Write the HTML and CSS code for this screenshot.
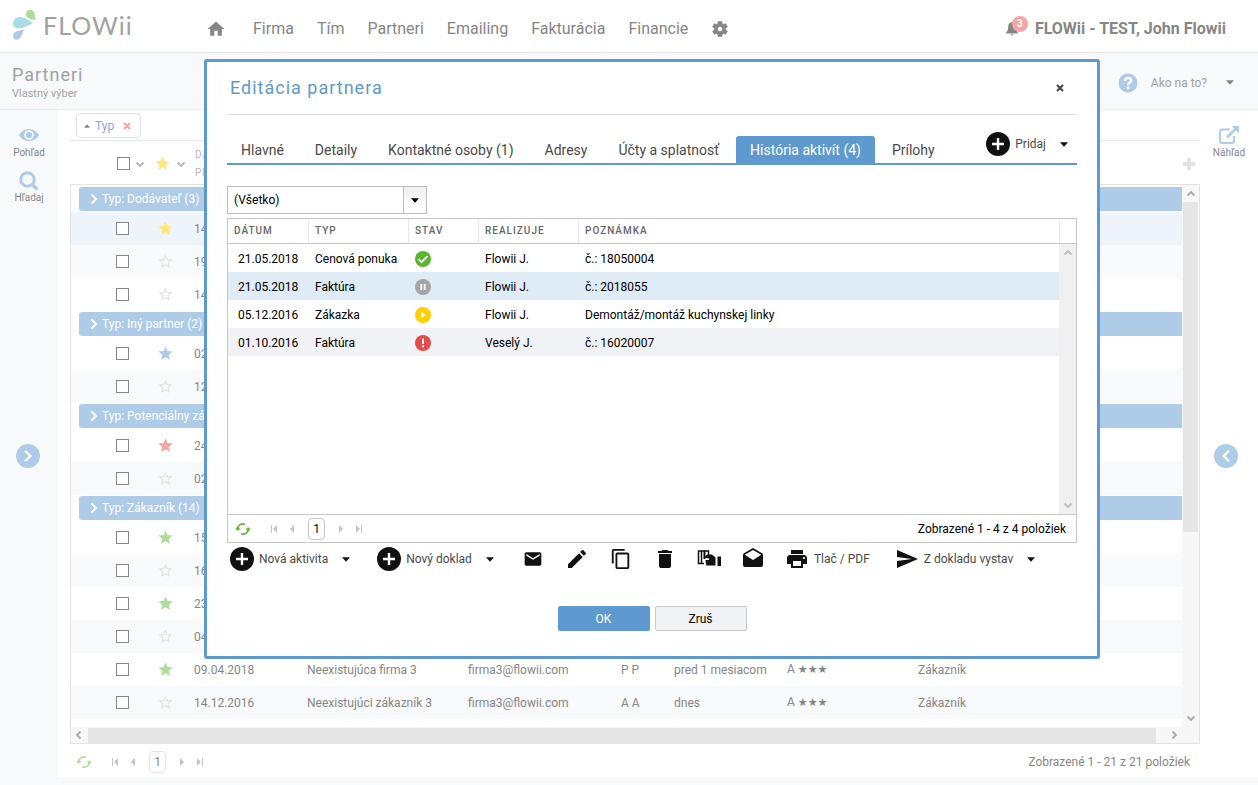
FILE: index.html
```html
<!DOCTYPE html>
<html lang="sk">
<head>
	<title>FLOWii - Partneri</title>
	<meta charset="utf-8">
	<link rel="stylesheet" href="styles.css">
</head>

<body>
<svg class="sprite" width="0" height="0">
	<symbol id="i-star" viewBox="0 0 24 24"><path d="M12 17.27L18.18 21l-1.64-7.03L22 9.24l-7.19-.61L12 2 9.19 8.63 2 9.24l5.46 4.73L5.82 21z"/></symbol>
	<symbol id="i-star-o" viewBox="0 0 24 24"><path d="M22 9.24l-7.19-.62L12 2 9.19 8.63 2 9.24l5.46 4.73L5.82 21 12 17.27 18.18 21l-1.63-7.03L22 9.24zM12 15.4l-3.76 2.27 1-4.28-3.32-2.88 4.38-.38L12 6.1l1.71 4.04 4.38.38-3.32 2.88 1 4.28L12 15.4z"/></symbol>
	<symbol id="i-right" viewBox="0 0 12 12"><path d="M3.500 1.500L8 6l-4.500 4.500" fill="none" stroke="currentColor" stroke-width="2"/></symbol>
	<symbol id="i-down" viewBox="0 0 10 10"><path d="M1.500 3.500L5 7l3.500-3.500" fill="none" stroke="currentColor" stroke-width="1.800"/></symbol>
	<symbol id="i-caret" viewBox="0 0 8 5"><path d="M0 .3h8L4 4.700z"/></symbol>
	<symbol id="i-x" viewBox="0 0 8 8"><path d="M1 1l6 6M7 1L1 7" fill="none" stroke="currentColor" stroke-width="2.200"/></symbol>
	<symbol id="i-add" viewBox="0 0 24 24"><circle cx="12" cy="12" r="12"/><path d="M12 6v12M6 12h12" stroke="#fff" stroke-width="2.400"/></symbol>
	<symbol id="i-refresh" viewBox="0 0 16 14"><path d="M2.800 8.500V7A5 5 0 0 1 10 2.400M13.200 5.500V7A5 5 0 0 1 6 11.600" fill="none" stroke="currentColor" stroke-width="1.600"/><path d="M0 7.500h5.600L2.800 4.600zM10.400 6.500H16l-2.800 2.900z"/></symbol>
	<symbol id="i-first" viewBox="0 0 8 8"><path d="M1 0h1v8H1zM7 0v8L3 4z"/></symbol>
	<symbol id="i-prev" viewBox="0 0 8 8"><path d="M6 0v8L2 4z"/></symbol>
	<symbol id="i-next" viewBox="0 0 8 8"><path d="M2 0v8l4-4z"/></symbol>
	<symbol id="i-last" viewBox="0 0 8 8"><path d="M6 0h1v8H6zM1 0v8l4-4z"/></symbol>
</svg>

<header class="topbar">
	<a class="logo" href="#">
		<svg width="24" height="32" viewBox="0 0 24 32">
			<path d="M14 5.500C14 1.500 17.500 0 20 1.200 23 2.600 23 7 23.500 11 19 10.500 14 9.500 14 5.500z" fill="#afdc99"/>
			<path d="M1 14.500C1 10 4.500 8 8 8c4.500 0 9 3.500 13 6-4 2.200-8 4.500-13 5.200-4 .5-7-1-7-4.700z" fill="#a9dde6"/>
			<path d="M12 20.500c-1.500 3.500-2.500 8-5.500 9.800C4 31.500.5 30 1 26.500c.5-4.500 6.500-4.800 11-6z" fill="#aecbe7"/>
		</svg>
		<span>FLOWii</span>
	</a>
	<nav class="mainnav">
		<a href="#" aria-label="Domov"><svg width="20" height="20" viewBox="0 0 24 24"><path d="M10 20v-6h4v6h5v-8h3L12 3 2 12h3v8z"/></svg></a>
		<a href="#">Firma</a>
		<a href="#">Tím</a>
		<a href="#">Partneri</a>
		<a href="#">Emailing</a>
		<a href="#">Fakturácia</a>
		<a href="#">Financie</a>
		<a href="#" aria-label="Nastavenia"><svg width="18" height="18" viewBox="0 0 24 24"><path fill-rule="evenodd" d="M19.430 12.980c.04-.32.07-.64.07-.98s-.03-.66-.07-.98l2.110-1.650c.19-.15.24-.42.12-.64l-2-3.460c-.12-.22-.39-.3-.61-.22l-2.490 1c-.52-.4-1.080-.73-1.690-.98l-.38-2.650C14.460 2.180 14.250 2 14 2h-4c-.25 0-.46.18-.49.42l-.38 2.650c-.61.25-1.170.59-1.690.98l-2.490-1c-.23-.09-.49 0-.61.22l-2 3.460c-.13.22-.07.49.12.64l2.110 1.650c-.04.32-.07.65-.07.98s.03.66.07.98l-2.110 1.650c-.19.15-.24.42-.12.64l2 3.460c.12.22.39.3.61.22l2.490-1c.52.4 1.080.73 1.690.98l.38 2.650c.03.24.24.42.49.42h4c.25 0 .46-.18.49-.42l.38-2.650c.61-.25 1.170-.59 1.690-.98l2.490 1c.23.09.49 0 .61-.22l2-3.460c.12-.22.07-.49-.12-.64l-2.110-1.650zM12 15.500c-1.930 0-3.500-1.570-3.500-3.500s1.570-3.500 3.500-3.500 3.500 1.570 3.500 3.500-1.570 3.500-3.500 3.500z" stroke="#868686" stroke-width="1"/></svg></a>
	</nav>
	<div class="account">
		<a class="bell" href="#" aria-label="Upozornenia">
			<svg width="14" height="14" viewBox="0 0 14 14"><path d="M7 0c2.500.4 3.800 2.200 3.800 4.700C10.800 8.500 12 9.500 13.500 11.500H.5C2 9.500 3.200 8.500 3.200 4.700 3.200 2.200 4.500.4 7 0zM5.500 12.300h3L7 13.900z"/></svg>
			<span class="badge">3</span>
		</a>
		<a href="#">FLOWii - TEST, John Flowii</a>
	</div>
</header>

<div class="subbar">
	<div>
		<h1>Partneri</h1>
		<p>Vlastný výber</p>
	</div>
	<button class="help" type="button">
		<svg width="20" height="20" viewBox="0 0 20 20"><circle cx="10" cy="10" r="9.500"/><path d="M7 8c0-4 6.200-4 6.200-.6 0 2.200-3.100 2.200-3.100 4.500" fill="none" stroke="#fff" stroke-width="2.400"/><circle cx="10.100" cy="14.800" r="1.500" fill="#fff"/></svg>
		<span>Ako na to?</span>
		<svg class="caret" width="8" height="5"><use href="#i-caret"/></svg>
	</button>
</div>

<div class="page">
	<aside class="side left">
		<a class="tool" href="#">
			<svg width="20" height="20" viewBox="0 0 20 20"><path fill-rule="evenodd" d="M0 9c4.500-8 15.500-8 20 0-4.500 8-15.500 8-20 0zM10 4.200a4.800 4.800 0 1 0 0 9.600 4.800 4.800 0 0 0 0-9.600z"/><circle cx="10" cy="9" r="3.100"/></svg>
			Pohľad
		</a>
		<a class="tool" href="#">
			<svg width="20" height="20" viewBox="0 0 20 20"><circle cx="8.500" cy="8.500" r="6.800" fill="none" stroke="currentColor" stroke-width="3"/><path d="M13 13.500l5.500 5" stroke="currentColor" stroke-width="3.400"/></svg>
			Hľadaj
		</a>
		<button class="round" type="button" aria-label="Rozbaliť"><svg width="14" height="14"><use href="#i-right"/></svg></button>
	</aside>

	<main class="content">
		<div class="groupbar">
			<span class="chip">
				<svg class="up" width="6" height="4"><use href="#i-caret"/></svg>
				<a href="#">Typ</a>
				<button type="button" aria-label="Zrušiť zoskupenie"><svg width="8" height="8"><use href="#i-x"/></svg></button>
			</span>
		</div>
		<div class="listhead">
			<input type="checkbox" aria-label="Označiť všetko">
			<svg class="drop" width="10" height="10"><use href="#i-down"/></svg>
			<svg class="star yellow" width="17" height="17"><use href="#i-star"/></svg>
			<svg class="drop" width="10" height="10"><use href="#i-down"/></svg>
			<span class="label">DÁT.<br>PRID.</span>
			<svg class="plus" width="14" height="14" viewBox="0 0 14 14"><path d="M7 1v12M1 7h12" stroke="currentColor" stroke-width="4"/></svg>
		</div>
		<div class="listbox">
			<div class="scrollrow">
				<div class="tablewrap">
					<table class="list">
						<colgroup><col class="c-check"><col class="c-star"><col class="c-date"><col class="c-name"><col class="c-mail"><col class="c-init"><col class="c-last"><col class="c-rate"><col></colgroup>
						<tbody>
							<tr class="group"><th colspan="9"><span><svg width="12" height="12"><use href="#i-right"/></svg>Typ: Dodávateľ (3)</span></th></tr>
							<tr class="sel"><td><input type="checkbox" aria-label="Označiť"></td><td><svg class="star yellow" width="17" height="17"><use href="#i-star"/></svg></td><td>14.05.</td><td></td><td></td><td></td><td></td><td></td><td></td></tr>
							<tr class="alt"><td><input type="checkbox" aria-label="Označiť"></td><td><svg class="star" width="17" height="17"><use href="#i-star-o"/></svg></td><td>19.04.</td><td></td><td></td><td></td><td></td><td></td><td></td></tr>
							<tr><td><input type="checkbox" aria-label="Označiť"></td><td><svg class="star" width="17" height="17"><use href="#i-star-o"/></svg></td><td>14.12.</td><td></td><td></td><td></td><td></td><td></td><td></td></tr>
						</tbody>
						<tbody>
							<tr class="group"><th colspan="9"><span><svg width="12" height="12"><use href="#i-right"/></svg>Typ: Iný partner (2)</span></th></tr>
							<tr><td><input type="checkbox" aria-label="Označiť"></td><td><svg class="star blue" width="17" height="17"><use href="#i-star"/></svg></td><td>02.05.</td><td></td><td></td><td></td><td></td><td></td><td></td></tr>
							<tr class="alt"><td><input type="checkbox" aria-label="Označiť"></td><td><svg class="star" width="17" height="17"><use href="#i-star-o"/></svg></td><td>12.04.</td><td></td><td></td><td></td><td></td><td></td><td></td></tr>
						</tbody>
						<tbody>
							<tr class="group"><th colspan="9"><span><svg width="12" height="12"><use href="#i-right"/></svg>Typ: Potenciálny zákazník (2)</span></th></tr>
							<tr><td><input type="checkbox" aria-label="Označiť"></td><td><svg class="star red" width="17" height="17"><use href="#i-star"/></svg></td><td>24.04.</td><td></td><td></td><td></td><td></td><td></td><td></td></tr>
							<tr class="alt"><td><input type="checkbox" aria-label="Označiť"></td><td><svg class="star" width="17" height="17"><use href="#i-star-o"/></svg></td><td>02.03.</td><td></td><td></td><td></td><td></td><td></td><td></td></tr>
						</tbody>
						<tbody>
							<tr class="group"><th colspan="9"><span><svg width="12" height="12"><use href="#i-right"/></svg>Typ: Zákazník (14)</span></th></tr>
							<tr><td><input type="checkbox" aria-label="Označiť"></td><td><svg class="star green" width="17" height="17"><use href="#i-star"/></svg></td><td>15.05.</td><td></td><td></td><td></td><td></td><td></td><td></td></tr>
							<tr class="alt"><td><input type="checkbox" aria-label="Označiť"></td><td><svg class="star" width="17" height="17"><use href="#i-star-o"/></svg></td><td>16.04.</td><td></td><td></td><td></td><td></td><td></td><td></td></tr>
							<tr><td><input type="checkbox" aria-label="Označiť"></td><td><svg class="star green" width="17" height="17"><use href="#i-star"/></svg></td><td>23.04.</td><td></td><td></td><td></td><td></td><td></td><td></td></tr>
							<tr class="alt"><td><input type="checkbox" aria-label="Označiť"></td><td><svg class="star" width="17" height="17"><use href="#i-star-o"/></svg></td><td>04.04.</td><td></td><td></td><td></td><td></td><td></td><td></td></tr>
							<tr><td><input type="checkbox" aria-label="Označiť"></td><td><svg class="star green" width="17" height="17"><use href="#i-star"/></svg></td><td>09.04.2018</td><td>Neexistujúca firma 3</td><td>firma3@flowii.com</td><td>P P</td><td>pred 1 mesiacom</td><td>A <span class="rate">★★★</span></td><td>Zákazník</td></tr>
							<tr class="alt"><td><input type="checkbox" aria-label="Označiť"></td><td><svg class="star" width="17" height="17"><use href="#i-star-o"/></svg></td><td>14.12.2016</td><td>Neexistujúci zákazník 3</td><td>firma3@flowii.com</td><td>A A</td><td>dnes</td><td>A <span class="rate">★★★</span></td><td>Zákazník</td></tr>
						</tbody>
					</table>
				</div>
				<div class="vscroll">
					<svg class="up" width="10" height="10"><use href="#i-down"/></svg>
					<i></i>
					<svg width="10" height="10"><use href="#i-down"/></svg>
				</div>
			</div>
			<div class="hscroll">
				<svg class="back" width="10" height="10"><use href="#i-down"/></svg>
				<i></i>
				<svg class="fwd" width="10" height="10"><use href="#i-down"/></svg>
			</div>
		</div>
		<div class="pager">
			<button class="refresh" type="button" aria-label="Obnoviť"><svg width="16" height="14"><use href="#i-refresh"/></svg></button>
			<button type="button" aria-label="Prvá"><svg width="8" height="8"><use href="#i-first"/></svg></button>
			<button type="button" aria-label="Predchádzajúca"><svg width="8" height="8"><use href="#i-prev"/></svg></button>
			<a class="num" href="#">1</a>
			<button type="button" aria-label="Nasledujúca"><svg width="8" height="8"><use href="#i-next"/></svg></button>
			<button type="button" aria-label="Posledná"><svg width="8" height="8"><use href="#i-last"/></svg></button>
			<span class="total">Zobrazené 1 - 21 z 21 položiek</span>
		</div>
	</main>

	<aside class="side right">
		<a class="tool" href="#">
			<svg width="22" height="20" viewBox="0 0 22 20"><path d="M12 3.500H4.500A2.500 2.500 0 0 0 2 6v8.500A2.500 2.500 0 0 0 4.500 17h9a2.500 2.500 0 0 0 2.500-2.500V10" fill="none" stroke="currentColor" stroke-width="2"/><path d="M9 11.500L18 2.500" stroke="currentColor" stroke-width="2.600"/><path d="M13.500 0H21v7.500z"/></svg>
			Náhľad
		</a>
		<button class="round" type="button" aria-label="Rozbaliť"><svg class="flip" width="14" height="14"><use href="#i-right"/></svg></button>
	</aside>
</div>

<div class="dialog" role="dialog" aria-labelledby="dlg-title">
	<div class="dlg-head">
		<h2 id="dlg-title">Editácia partnera</h2>
		<button type="button" aria-label="Zavrieť"><svg width="8" height="8"><use href="#i-x"/></svg></button>
	</div>
	<div class="tabs">
		<a href="#">Hlavné</a>
		<a href="#">Detaily</a>
		<a href="#">Kontaktné osoby (1)</a>
		<a href="#">Adresy</a>
		<a href="#">Účty a splatnosť</a>
		<a class="active" href="#">História aktivít (4)</a>
		<a href="#">Prílohy</a>
		<button class="action add" type="button">
			<svg width="24" height="24"><use href="#i-add"/></svg>
			<span>Pridaj</span>
			<svg class="caret" width="8" height="5"><use href="#i-caret"/></svg>
		</button>
	</div>

	<div class="combo">
		<select aria-label="Typ aktivity"><option>(Všetko)</option></select>
		<span><svg width="8" height="5"><use href="#i-caret"/></svg></span>
	</div>

	<div class="grid">
		<div class="gridbody">
			<table>
				<colgroup><col class="g-date"><col class="g-type"><col class="g-state"><col class="g-who"><col><col class="g-end"></colgroup>
				<thead>
					<tr><th>DÁTUM</th><th>TYP</th><th>STAV</th><th>REALIZUJE</th><th>POZNÁMKA</th><th></th></tr>
				</thead>
				<tbody>
					<tr>
						<td>21.05.2018</td><td>Cenová ponuka</td>
						<td><svg width="16" height="16" viewBox="0 0 16 16"><circle cx="8" cy="8" r="8" fill="#5cb531"/><path d="M3.500 8.200l3 3 6-6" fill="none" stroke="#fff" stroke-width="1.800"/></svg></td>
						<td>Flowii J.</td><td colspan="2">č.: 18050004</td>
					</tr>
					<tr class="sel">
						<td>21.05.2018</td><td>Faktúra</td>
						<td><svg width="16" height="16" viewBox="0 0 16 16"><circle cx="8" cy="8" r="8" fill="#a5a5a5"/><path d="M6.300 5v6M9.700 5v6" stroke="#fff" stroke-width="1.800"/></svg></td>
						<td>Flowii J.</td><td colspan="2">č.: 2018055</td>
					</tr>
					<tr>
						<td>05.12.2016</td><td>Zákazka</td>
						<td><svg width="16" height="16" viewBox="0 0 16 16"><circle cx="8" cy="8" r="8" fill="#ffcf00"/><path d="M6 4.800v6.400L11 8z" fill="#fff"/></svg></td>
						<td>Flowii J.</td><td colspan="2">Demontáž/montáž kuchynskej linky</td>
					</tr>
					<tr class="alt">
						<td>01.10.2016</td><td>Faktúra</td>
						<td><svg width="16" height="16" viewBox="0 0 16 16"><circle cx="8" cy="8" r="8" fill="#e64c4c"/><path d="M7 3.500h2V9H7zM7 10.300h2v2H7z" fill="#fff"/></svg></td>
						<td>Veselý J.</td><td colspan="2">č.: 16020007</td>
					</tr>
				</tbody>
			</table>
			<div class="vscroll">
				<svg class="up" width="10" height="10"><use href="#i-down"/></svg>
				<svg width="10" height="10"><use href="#i-down"/></svg>
			</div>
		</div>
		<div class="pager">
			<button class="refresh" type="button" aria-label="Obnoviť"><svg width="16" height="14"><use href="#i-refresh"/></svg></button>
			<button type="button" aria-label="Prvá"><svg width="8" height="8"><use href="#i-first"/></svg></button>
			<button type="button" aria-label="Predchádzajúca"><svg width="8" height="8"><use href="#i-prev"/></svg></button>
			<a class="num" href="#">1</a>
			<button type="button" aria-label="Nasledujúca"><svg width="8" height="8"><use href="#i-next"/></svg></button>
			<button type="button" aria-label="Posledná"><svg width="8" height="8"><use href="#i-last"/></svg></button>
			<span class="total">Zobrazené 1 - 4 z 4 položiek</span>
		</div>
	</div>

	<div class="actions">
		<button class="action" type="button">
			<svg width="24" height="24"><use href="#i-add"/></svg>
			<span>Nová aktivita</span>
			<svg class="caret" width="8" height="5"><use href="#i-caret"/></svg>
		</button>
		<button class="action" type="button">
			<svg width="24" height="24"><use href="#i-add"/></svg>
			<span>Nový doklad</span>
			<svg class="caret" width="8" height="5"><use href="#i-caret"/></svg>
		</button>
		<div class="icons">
			<button type="button" aria-label="Email"><svg width="20" height="20" viewBox="0 0 24 24"><path d="M20 4H4c-1.100 0-1.990.9-1.990 2L2 18c0 1.100.9 2 2 2h16c1.100 0 2-.9 2-2V6c0-1.100-.9-2-2-2zm0 4l-8 5-8-5V6l8 5 8-5v2z"/></svg></button>
			<button type="button" aria-label="Upraviť"><svg width="24" height="24" viewBox="0 0 24 24"><path d="M3 17.250V21h3.750L17.810 9.940l-3.750-3.750L3 17.250zM20.710 7.040c.39-.39.39-1.020 0-1.410l-2.340-2.340c-.39-.39-1.020-.39-1.410 0l-1.830 1.830 3.750 3.750 1.830-1.830z"/></svg></button>
			<button type="button" aria-label="Kopírovať"><svg width="22" height="22" viewBox="0 0 24 24"><path d="M16 1H4c-1.100 0-2 .9-2 2v14h2V3h12V1zm3 4H8c-1.100 0-2 .9-2 2v14c0 1.100.9 2 2 2h11c1.100 0 2-.9 2-2V7c0-1.100-.9-2-2-2zm0 16H8V7h11v14z"/></svg></button>
			<button type="button" aria-label="Zmazať"><svg width="24" height="24" viewBox="0 0 24 24"><path d="M6 19c0 1.100.9 2 2 2h8c1.100 0 2-.9 2-2V7H6v12zM19 4h-3.500l-1-1h-5l-1 1H5v2h14V4z"/></svg></button>
			<button type="button" aria-label="Archív"><svg width="24" height="24" viewBox="0 0 24 24"><path d="M1.500 4h10v4M1.500 3.500V16.500H7M4.500 4v12.500" fill="none" stroke="currentColor" stroke-width="1.500"/><path d="M6.500 3.500h2V12h-2zM7.500 10.500L10 7.500h5l3.500 3v8H10c-1.500 0-1.500-1.300-.3-1.600-1.500-.3-1.500-1.600-.4-1.900-1.300-.4-1.300-1.700-.2-2h3v-1.500zM20.500 9.500H24V19h-3.500z"/></svg></button>
			<button type="button" aria-label="Otvoriť email"><svg width="24" height="24" viewBox="0 0 24 24"><path d="M21.990 8c0-.72-.37-1.350-.94-1.700L12 1 2.950 6.300C2.380 6.650 2 7.280 2 8v10c0 1.100.9 2 2 2h16c1.100 0 2-.9 2-2l-.01-10zM12 13L3.740 7.840 12 3l8.260 4.840L12 13z"/></svg></button>
		</div>
		<button class="action print" type="button">
			<svg width="24" height="24" viewBox="0 0 24 24"><path d="M19 8H5c-1.660 0-3 1.340-3 3v6h4v4h12v-4h4v-6c0-1.660-1.340-3-3-3zm-3 11H8v-5h8v5zm3-7c-.55 0-1-.45-1-1s.45-1 1-1 1 .45 1 1-.45 1-1 1zm-1-9H6v4h12V3z"/></svg>
			<span>Tlač / PDF</span>
		</button>
		<button class="action send" type="button">
			<svg width="24" height="24" viewBox="0 0 24 24"><path d="M2.010 21L23 12 2.010 3 2 10l15 2-15 2z"/></svg>
			<span>Z dokladu vystav</span>
			<svg class="caret" width="8" height="5"><use href="#i-caret"/></svg>
		</button>
	</div>

	<div class="buttons">
		<button class="btn primary" type="button">OK</button>
		<button class="btn" type="button">Zruš</button>
	</div>
</div>
</body>
</html>
```
FILE: styles.css
```css
* {
	box-sizing:border-box;
}
body {
	margin:0;
	min-height:100vh;
	display:flex;
	flex-direction:column;
	position:relative;
	background:#f7f9fd;
	color:#868686;
	font:12px/16px Roboto,"Noto Sans",sans-serif;
}
a {
	color:inherit;
	text-decoration:none;
}
button {
	margin:0;
	padding:0;
	border:0;
	background:none;
	color:inherit;
	font:inherit;
	cursor:pointer;
}
svg {
	display:block;
	flex:none;
	fill:currentColor;
}
h1,h2,p {
	margin:0;
	font-weight:normal;
}
table {
	border-collapse:separate;
	border-spacing:0;
	table-layout:fixed;
	width:100%;
}
input[type=checkbox] {
	appearance:none;
	display:block;
	width:13px;
	height:13px;
	margin:0;
	border:1px solid #868686;
	background:#fff;
}
.sprite {
	position:absolute;
}

/* top bar */
.topbar {
	height:53px;
	display:flex;
	align-items:center;
	padding:0 32px 0 12px;
	border-bottom:1px solid #e6e6e6;
	background:#fff;
	font-size:16px;
}
.logo {
	display:flex;
	align-items:center;
	gap:7px;
	width:194px;
	padding-bottom:2px;
	color:#a2a2a2;
	font:25px/32px Lato,sans-serif;
	letter-spacing:1px;
}
.mainnav {
	display:flex;
	align-items:center;
	gap:23px;
	padding-top:6px;
}
.mainnav a:first-child {
	margin-right:4px;
}
.account {
	display:flex;
	align-items:center;
	gap:16px;
	margin-left:auto;
	padding-top:6px;
	font-weight:bold;
}
.bell {
	position:relative;
}
.badge {
	position:absolute;
	left:7px;
	top:-6px;
	width:16px;
	height:16px;
	border-radius:8px;
	background:#f5a5a5;
	color:#fff;
	font-size:10px;
	text-align:center;
}

/* title bar */
.subbar {
	height:57px;
	display:flex;
	align-items:center;
	justify-content:space-between;
	padding:3px 24px 0 12px;
	border-bottom:1px solid #ebecee;
	background:#f8f9fb;
	color:#a2a2a2;
}
.subbar h1 {
	font-size:18px;
	line-height:22px;
	letter-spacing:1px;
}
.subbar p {
	font-size:11px;
	line-height:16px;
}
.help {
	display:flex;
	align-items:center;
	gap:13px;
}
.help svg {
	color:#aecbe7;
}
.help .caret {
	margin-left:6px;
	color:#868686;
}

/* page */
.page {
	flex:1;
	display:flex;
	margin-bottom:8px;
}
.side {
	display:flex;
	flex-direction:column;
	align-items:center;
	gap:11px;
	width:58px;
	padding-top:16px;
	font-size:10px;
	line-height:14px;
	background:#fff;
}
.side.left {
	background:#f8f9fb;
}
.tool {
	display:flex;
	flex-direction:column;
	align-items:center;
}
.tool svg {
	color:#aecbe7;
}
.round {
	width:24px;
	height:24px;
	display:flex;
	align-items:center;
	justify-content:center;
	margin:auto 2px 309px 0;
	border-radius:12px;
	background:#aecbe7;
	color:#fff;
}
.side.right .round {
	margin-right:6px;
}
.flip {
	transform:scaleX(-1);
}
.content {
	flex:1;
	min-width:0;
	display:flex;
	flex-direction:column;
	padding-left:12px;
	background:#fff;
}
.groupbar {
	height:31px;
	padding:3px 6px;
	border-bottom:1px solid #e6e6e6;
}
.chip {
	width:65px;
	height:25px;
	display:flex;
	align-items:center;
	gap:5px;
	padding-left:7px;
	border:1px solid #e3e3e3;
	border-radius:4px;
}
.chip a {
	color:#8ba4ee;
}
.chip button {
	margin-left:4px;
	color:#f5a5a5;
}
.up {
	transform:scaleY(-1);
}
.listhead {
	height:43px;
	display:flex;
	align-items:center;
	padding:2px 4px 0 47px;
	font-size:10px;
}
.listhead .drop {
	margin:0 9px 0 5px;
	color:#b5b5b5;
}
.listhead .label {
	line-height:18px;
	letter-spacing:1px;
	color:#b5b5b5;
}
.listhead .plus {
	margin-left:auto;
	color:#e3e3e3;
}
.star {
	color:#e3e3e3;
}
.yellow {
	color:#ffe77a;
}
.blue {
	color:#aecbe7;
}
.red {
	color:#f5a5a5;
}
.green {
	color:#afdc99;
}
.listbox {
	flex:1;
	display:flex;
	flex-direction:column;
	border:1px solid #e3e3e3;
}
.scrollrow {
	flex:1;
	display:flex;
}
.tablewrap {
	flex:1;
	min-width:0;
	padding-top:1px;
}
.list td {
	height:33px;
	padding:0;
	white-space:nowrap;
}
.list td:first-child {
	padding-left:45px;
}
.c-check {
	width:86px;
}
.c-star {
	width:37px;
}
.c-date,.c-last {
	width:113px;
}
.c-name {
	width:161px;
}
.c-mail {
	width:153px;
}
.c-init {
	width:53px;
}
.c-rate {
	width:131px;
}
.list .group th {
	height:26px;
	padding:1px 0 1px 8px;
	color:#fff;
	font-weight:normal;
	text-align:left;
}
.group span {
	height:24px;
	display:flex;
	align-items:center;
	gap:2px;
	padding-left:9px;
	border-radius:3px 0 0 3px;
	background:#aecbe7;
}
.list .sel {
	background:#eff4fb;
}
.list .alt {
	background:#f8f9fb;
}
.rate {
	font-family:"DejaVu Sans",sans-serif;
	font-size:11px;
}
.vscroll {
	width:17px;
	display:flex;
	flex-direction:column;
	align-items:center;
	justify-content:space-between;
	padding:4px 0;
	background:#f7f7f7;
}
.vscroll svg,.hscroll svg {
	color:#aaa;
}
.vscroll i {
	width:15px;
	height:330px;
	margin:3px 0 auto;
	background:#e5e5e5;
}
.hscroll {
	height:16px;
	display:flex;
	align-items:center;
	gap:4px;
	padding:0 20px 0 3px;
	background:#f7f7f7;
}
.hscroll i {
	flex:1;
	height:15px;
	margin-right:9px;
	background:#e5e5e5;
}
.back {
	transform:rotate(90deg);
}
.fwd {
	transform:rotate(-90deg);
}
.pager {
	height:33px;
	display:flex;
	align-items:center;
	padding:2px 10px 0 6px;
	color:#c4c4c4;
}
.pager button {
	margin-right:10px;
}
.pager .refresh {
	margin-right:19px;
	color:#afdc99;
}
.pager .num {
	width:17px;
	height:22px;
	margin:0 12px 0 2px;
	border:1px solid #e3e3e3;
	border-radius:4px;
	color:#868686;
	line-height:20px;
	text-align:center;
}
.pager .total {
	margin-left:auto;
	color:#868686;
}

/* dialog */
.dialog {
	position:absolute;
	left:204px;
	right:158px;
	top:59px;
	padding:0 20px 25px;
	border:3px solid #5e99cf;
	border-radius:3px;
	background:#fff;
	color:#4a4a4a;
}
.dlg-head {
	height:53px;
	display:flex;
	align-items:center;
	justify-content:space-between;
	padding:0 13px 0 3px;
	border-bottom:1px solid #dcdcdc;
}
.dlg-head h2 {
	color:#5e99cf;
	font-size:18px;
	line-height:24px;
	letter-spacing:1px;
}
.tabs {
	display:flex;
	align-items:flex-end;
	gap:3px;
	height:50px;
	margin-bottom:21px;
	border-bottom:2px solid #5e99cf;
	font-size:14px;
}
.tabs a {
	height:27px;
	padding:0 14px;
	border-radius:3px 3px 0 0;
	line-height:28px;
}
.tabs .active {
	background:#5e99cf;
	color:#fff;
}
.action {
	display:flex;
	align-items:center;
	gap:5px;
	color:#4a4a4a;
	font-size:12px;
}
.action svg,.icons svg {
	color:#111;
}
.action .caret {
	margin-left:9px;
}
.tabs .add {
	margin:0 9px 7px auto;
}
.combo {
	display:flex;
	width:200px;
	height:28px;
	margin-bottom:4px;
	border:1px solid #bdbdbd;
	position:relative;
}
.combo select {
	appearance:none;
	width:100%;
	padding:0 28px 0 6px;
	border:0;
	background:#fff;
	color:#000;
	font:inherit;
}
.combo span {
	position:absolute;
	top:0;
	right:0;
	bottom:0;
	width:23px;
	display:flex;
	align-items:center;
	justify-content:center;
	border-left:1px solid #bdbdbd;
	background:linear-gradient(#f0f0f0,#fff);
	color:#000;
	pointer-events:none;
}
.grid {
	border:1px solid #c6c6c6;
	color:#000;
}
.gridbody {
	height:296px;
	display:flex;
	align-items:flex-start;
	position:relative;
	border-bottom:1px solid #c6c6c6;
}
.grid th {
	height:25px;
	padding:0 6px;
	border-right:1px solid #e6e6e6;
	border-bottom:1px solid #c6c6c6;
	color:#666;
	font-size:10px;
	font-weight:500;
	letter-spacing:1px;
	text-align:left;
}
.grid th:last-child {
	border-right:0;
}
.grid td {
	height:28px;
	padding:1px 6px 0;
	white-space:nowrap;
}
.grid td:first-child {
	padding-left:10px;
}
.grid .sel {
	background:#dfebf5;
}
.grid .alt {
	background:#f1f2f6;
}
.g-date {
	width:81px;
}
.g-type,.g-who {
	width:100px;
}
.g-state {
	width:70px;
}
.g-end {
	width:16px;
}
.grid .vscroll {
	position:absolute;
	top:25px;
	right:0;
	bottom:0;
	background:#f0f0f0;
}
.grid .vscroll svg {
	color:#bbb;
}
.grid .pager {
	height:27px;
	padding:0 10px 0 7px;
}
.grid .refresh {
	color:#5cb531;
}
.grid .num {
	border-color:#c6c6c6;
	color:#000;
}
.grid .total {
	color:#000;
}
.actions {
	display:flex;
	align-items:center;
	gap:27px;
	padding:4px 0 0 3px;
}
.icons {
	display:flex;
	gap:20px;
}
.icons button {
	width:24px;
	height:24px;
	display:flex;
	align-items:center;
	justify-content:center;
}
.action.print {
	margin-left:-7px;
}
.action.send {
	margin-left:-2px;
}
.buttons {
	display:flex;
	justify-content:center;
	gap:5px;
	margin-top:35px;
}
.btn {
	width:92px;
	height:25px;
	border:1px solid #c9c9c9;
	border-radius:2px;
	background:#f1f2f6;
	color:#000;
}
.btn.primary {
	border-color:#5e99cf;
	background:#5e99cf;
	color:#fff;
}
```
